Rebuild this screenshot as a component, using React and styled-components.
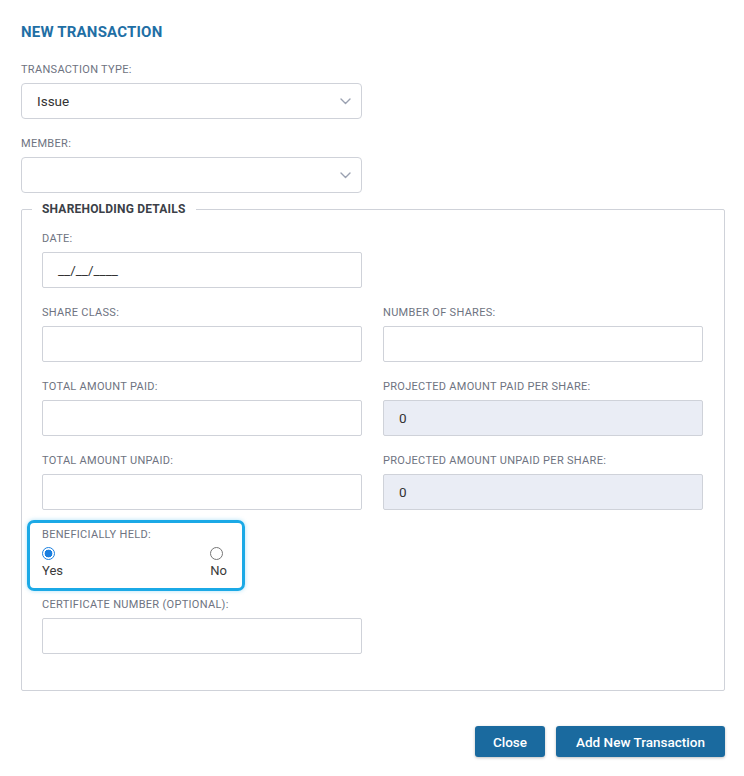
import React from 'react';
import styled, { createGlobalStyle } from 'styled-components';

const GlobalStyle = createGlobalStyle`
  body {
    margin: 0;
    background: #fff;
    font-family: Roboto, "Liberation Sans", Arial, sans-serif;
  }
`;

const rows = [
  [{ label: 'SHARE CLASS:' }, { label: 'NUMBER OF SHARES:' }],
  [{ label: 'TOTAL AMOUNT PAID:' }, { label: 'PROJECTED AMOUNT PAID PER SHARE:', value: '0', readOnly: true }],
  [{ label: 'TOTAL AMOUNT UNPAID:' }, { label: 'PROJECTED AMOUNT UNPAID PER SHARE:', value: '0', readOnly: true }],
];

function Chevron() {
  return (
    <svg width="11" height="7" viewBox="0 0 11 7" fill="none">
      <path d="M1 1l4.5 4.5L10 1" stroke="#9aa1b1" strokeWidth="1.4" strokeLinecap="round" strokeLinejoin="round" />
    </svg>
  );
}

function Field({ label, value, readOnly }) {
  return (
    <FieldBox>
      <Label>{label}</Label>
      <Input $readOnly={readOnly}>{value}</Input>
    </FieldBox>
  );
}

export default function App() {
  return (
    <>
      <GlobalStyle />
      <Page>
        <Title>NEW TRANSACTION</Title>

        <TopField>
          <Label>TRANSACTION TYPE:</Label>
          <Select>
            <span>Issue</span>
            <Chevron />
          </Select>
        </TopField>

        <TopField>
          <Label>MEMBER:</Label>
          <Select>
            <span></span>
            <Chevron />
          </Select>
        </TopField>

        <Fieldset>
          <Legend>SHAREHOLDING DETAILS</Legend>
          <Grid>
            <Field label="DATE:" value="__/__/____" />
            <div />
            {rows.map((row, i) => (
              <React.Fragment key={i}>
                {row.map((f) => (
                  <Field key={f.label} {...f} />
                ))}
              </React.Fragment>
            ))}
            <RadioGroup>
              <Label>BENEFICIALLY HELD:</Label>
              <RadioRow>
                <RadioOption>
                  <Radio $checked />
                  <RadioText>Yes</RadioText>
                </RadioOption>
                <RadioOption>
                  <Radio />
                  <RadioText>No</RadioText>
                </RadioOption>
              </RadioRow>
            </RadioGroup>
            <div />
            <Field label="CERTIFICATE NUMBER (OPTIONAL):" />
          </Grid>
        </Fieldset>

        <Footer>
          <Button $width="70px">Close</Button>
          <Button $width="169px">Add New Transaction</Button>
        </Footer>
      </Page>
    </>
  );
}

const Page = styled.div`
  padding: 22px 20px 20px 21px;
  width: 704px;
`;

const Title = styled.h1`
  margin: 0 0 21px;
  font-size: 15px;
  line-height: 20px;
  font-weight: 700;
  color: #1f6fa5;
  letter-spacing: 0.2px;
`;

const Label = styled.div`
  font-size: 11px;
  line-height: 14px;
  color: #6e7381;
  letter-spacing: 0.3px;
  margin-bottom: 6px;
  white-space: nowrap;
`;

const TopField = styled.div`
  width: 341px;
  margin-bottom: 18px;
`;

const Select = styled.div`
  box-sizing: border-box;
  height: 36px;
  border: 1px solid #cfd2d9;
  border-radius: 4px;
  display: flex;
  align-items: center;
  justify-content: space-between;
  padding: 0 10px 0 15px;
  font-size: 13.5px;
  color: #333;
`;

const Fieldset = styled.fieldset`
  margin: -9px 0 0;
  padding: 0 20px 36px;
  border: 1px solid #cfd2d9;
  border-radius: 2px;
`;

const Legend = styled.legend`
  margin-left: -10px;
  padding: 0 10px;
  font-size: 12px;
  line-height: 14px;
  font-weight: 700;
  color: #3b3f47;
  letter-spacing: 0.2px;
`;

const Grid = styled.div`
  display: grid;
  grid-template-columns: 320px 320px;
  column-gap: 21px;
  row-gap: 18px;
  padding-top: 16px;
`;

const FieldBox = styled.div`
  display: flex;
  flex-direction: column;
`;

const Input = styled.div`
  box-sizing: border-box;
  height: 36px;
  border: 1px solid #cfd2d9;
  border-radius: 2px;
  background: ${(p) => (p.$readOnly ? '#eaedf5' : '#fff')};
  display: flex;
  align-items: center;
  padding: 0 15px;
  font-size: 13.5px;
  color: #333;
`;

const RadioGroup = styled.div`
  position: relative;
  width: 185px;
  margin-bottom: 1px;

  /* highlight ring drawn around the group */
  &::before {
    content: '';
    position: absolute;
    top: -8px;
    left: -15px;
    right: -18px;
    bottom: -12px;
    border: 3px solid #1ba9e6;
    border-radius: 7px;
    box-shadow: 0 0 4px rgba(27, 169, 230, 0.35);
    pointer-events: none;
  }
`;

const RadioRow = styled.div`
  display: flex;
  justify-content: space-between;
  margin-top: -1px;
`;

const RadioOption = styled.div`
  display: flex;
  flex-direction: column;
  align-items: flex-start;
`;

const Radio = styled.span`
  box-sizing: border-box;
  width: 13px;
  height: 13px;
  border-radius: 50%;
  border: 1px solid ${(p) => (p.$checked ? '#1a7fe0' : '#767676')};
  background: ${(p) =>
    p.$checked ? 'radial-gradient(circle, #1a7fe0 0 3.6px, #fff 4.2px)' : '#fff'};
`;

const RadioText = styled.span`
  font-size: 13px;
  line-height: 17px;
  font-weight: 400;
  color: #3a3a3a;
  margin-top: 2px;
`;

const Footer = styled.div`
  display: flex;
  justify-content: flex-end;
  gap: 11px;
  margin-top: 35px;
`;

const Button = styled.button`
  width: ${(p) => p.$width};
  height: 31px;
  padding: 0;
  border: none;
  border-radius: 3px;
  background: #1a6a9f;
  color: #fff;
  font-family: Roboto, "Liberation Sans", Arial, sans-serif;
  font-size: 13.5px;
  font-weight: 500;
  box-shadow: 0 1px 3px rgba(0, 0, 0, 0.25);
`;
